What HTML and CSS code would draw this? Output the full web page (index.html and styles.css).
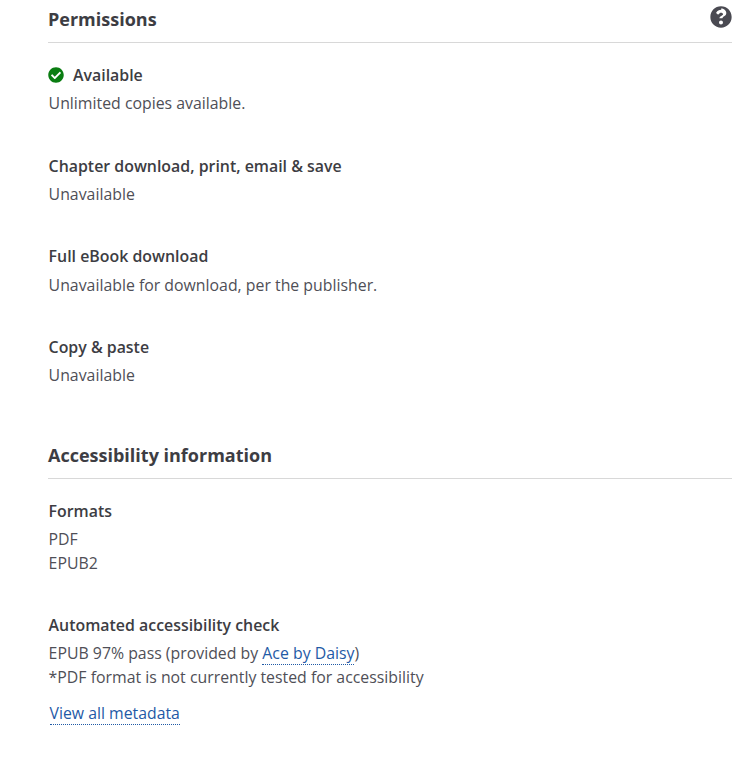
FILE: index.html
```html
<!DOCTYPE html>
<html lang="en">
<head>
<meta charset="utf-8">
<title>Permissions</title>
<link rel="stylesheet" href="styles.css">
</head>
<body>
<main class="page">
  <section class="panel">
    <header class="heading heading-first">
      <h2 class="heading-title">Permissions</h2>
      <svg class="help" viewBox="0 0 512 512" width="22" height="22" aria-hidden="true"><path fill="#4a4a52" d="M504 256c0 137-111 248-248 248S8 393 8 256 119 8 256 8s248 111 248 248zM262.700 90c-54.500 0-89.300 23-116.500 63.800-3.500 5.300-2.400 12.400 2.700 16.300l34.700 26.300c5.200 3.900 12.600 3 16.700-2.100 17.900-22.700 30.100-35.800 57.300-35.800 20.400 0 45.700 13.100 45.700 33 0 15-12.400 22.700-32.600 34-23.600 13.200-54.800 29.700-54.800 70.900V272c0 6.600 5.400 12 12 12h56c6.600 0 12-5.400 12-12v-1.300c0-28.600 83.400-29.700 83.400-107 0-58.200-60.400-102.700-120.600-102.700zM256 336c-25.400 0-46 20.600-46 46s20.600 46 46 46 46-20.600 46-46-20.600-46-46-46z"/></svg>
    </header>
    <div class="blocks blocks-first">
      <div class="block">
        <h3 class="label label-icon">
          <svg class="check" viewBox="0 0 512 512" width="16" height="16" aria-hidden="true"><path fill="#0a7d12" d="M504 256c0 137-111 248-248 248S8 393 8 256 119 8 256 8s248 111 248 248zM227.300 387.300l184-184c6.200-6.200 6.200-16.400 0-22.600l-22.600-22.600c-6.200-6.200-16.400-6.200-22.600 0L216 308.100l-70.100-70.100c-6.200-6.200-16.400-6.200-22.600 0l-22.600 22.600c-6.200 6.200-6.200 16.400 0 22.600l104 104c6.200 6.200 16.400 6.200 22.600 0z"/></svg>
          Available
        </h3>
        <p class="text">Unlimited copies available.</p>
      </div>
      <div class="block">
        <h3 class="label">Chapter download, print, email &amp; save</h3>
        <p class="text">Unavailable</p>
      </div>
      <div class="block">
        <h3 class="label">Full eBook download</h3>
        <p class="text">Unavailable for download, per the publisher.</p>
      </div>
      <div class="block">
        <h3 class="label">Copy &amp; paste</h3>
        <p class="text">Unavailable</p>
      </div>
    </div>
  </section>
  <section class="panel panel-second">
    <header class="heading">
      <h2 class="heading-title">Accessibility information</h2>
    </header>
    <div class="blocks blocks-second">
      <div class="block">
        <h3 class="label">Formats</h3>
        <p class="text">PDF</p>
        <p class="text">EPUB2</p>
      </div>
      <div class="block">
        <h3 class="label">Automated accessibility check</h3>
        <p class="text">EPUB 97% pass (provided by <a class="link" href="#">Ace by Daisy</a>)</p>
        <p class="text">*PDF format is not currently tested for accessibility</p>
      </div>
    </div>
    <p class="more"><a class="link" href="#">View all metadata</a></p>
  </section>
</main>
</body>
</html>
```

FILE: styles.css
```css
* { box-sizing: border-box; }
html, body { margin: 0; padding: 0; background: #fff; }
body {
  font-family: "Open Sans", "Noto Sans", sans-serif;
  font-size: 16px;
  line-height: 24px;
  color: #4f4f57;
}
.page { padding: 7px 20px 0 48px; }
.panel-second { margin-top: 55.6px; }
.heading {
  display: flex;
  justify-content: space-between;
  align-items: flex-start;
  height: 36px;
  border-bottom: 1px solid #d8d8d8;
}
.heading-title { margin: 0; font-size: 18px; line-height: 24px; font-weight: 700; color: #3d3d43; }
.help { margin-top: -1px; }
.blocks {
  display: flex;
  flex-direction: column;
  margin: 20px 0 0 0.6px;
}
.blocks-first { gap: 38.27px; }
.blocks-second { gap: 37.6px; }
.label {
  margin: 0 0 4.4px;
  font-size: 15.9px;
  line-height: 24px;
  font-weight: 600;
  color: #3d3d43;
}
.label-icon { display: flex; align-items: center; gap: 9px; margin-left: -0.6px; }
.text { margin: 0; font-size: 15.85px; line-height: 24px; }
.link {
  color: #1f5aa6;
  text-decoration: none;
  border-bottom: 1px dotted #1f5aa6;
}
.more { margin: 12px 0 0 1.6px; font-size: 15.8px; }
```
